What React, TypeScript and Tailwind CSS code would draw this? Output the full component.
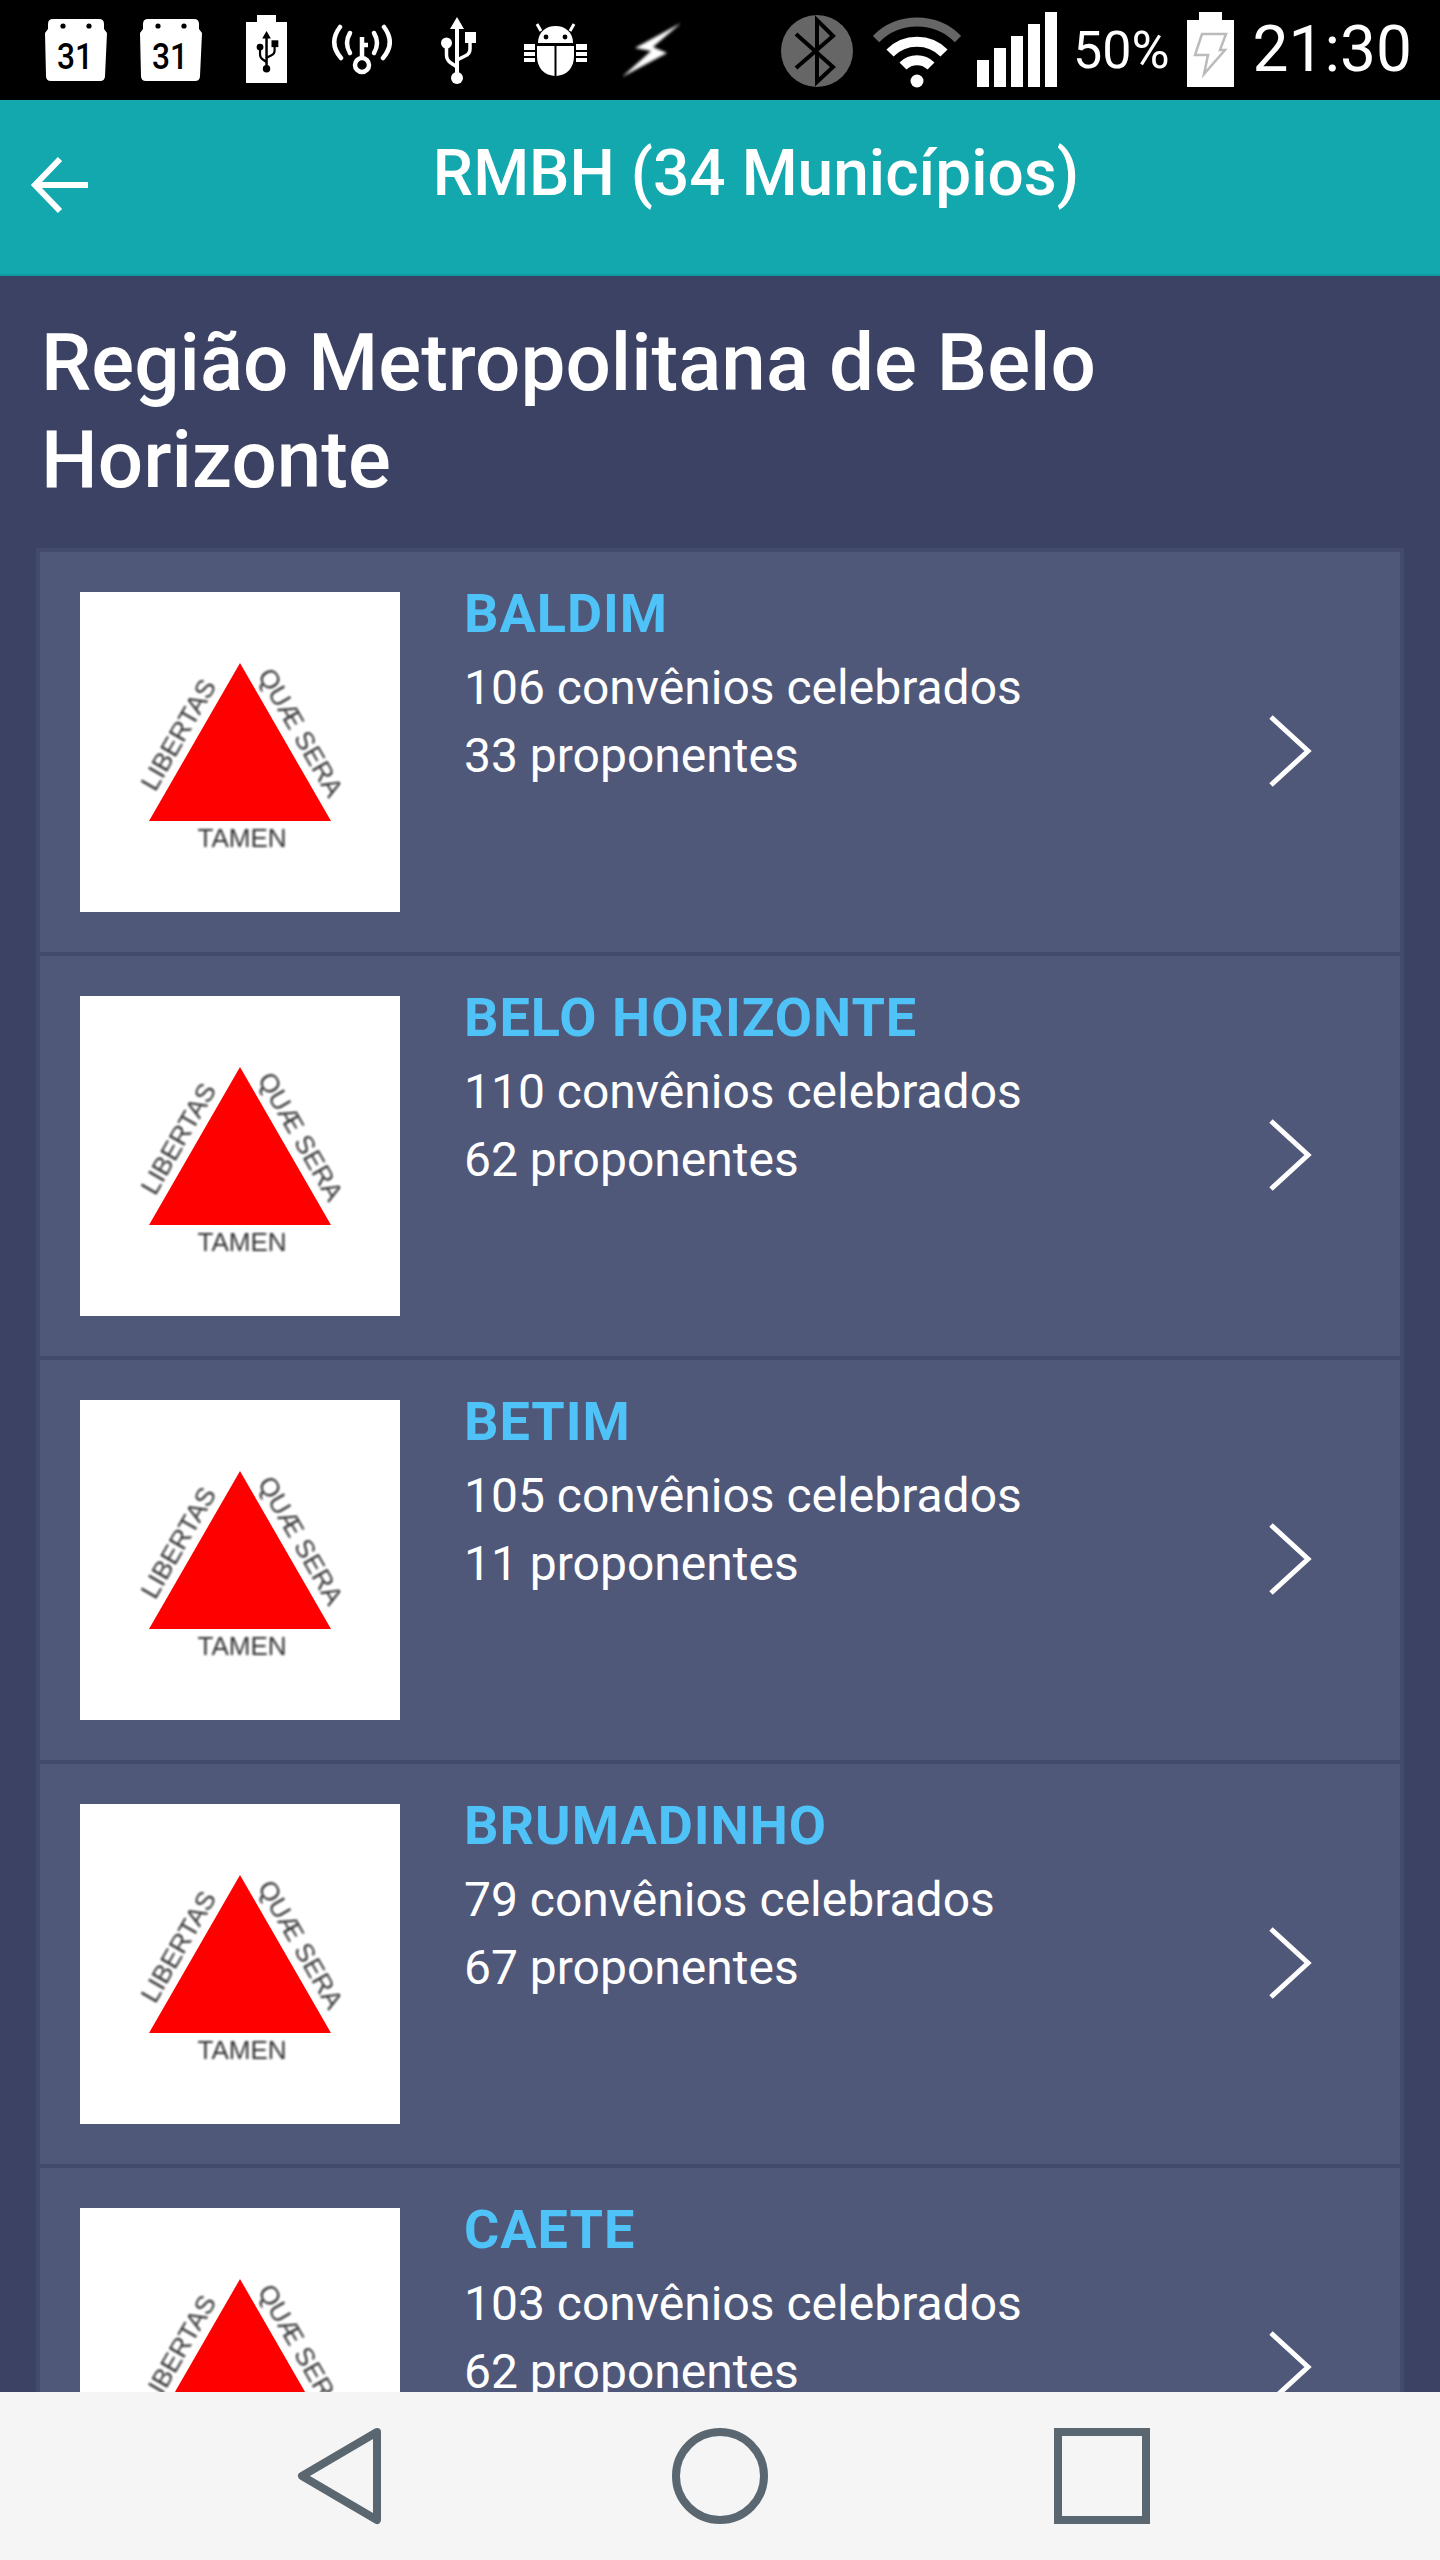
const municipios = [
  { nome: "BALDIM", convenios: 106, proponentes: 33 },
  { nome: "BELO HORIZONTE", convenios: 110, proponentes: 62 },
  { nome: "BETIM", convenios: 105, proponentes: 11 },
  { nome: "BRUMADINHO", convenios: 79, proponentes: 67 },
  { nome: "CAETE", convenios: 103, proponentes: 62 },
];

function UsbGlyph({ x, y, scale, color }: { x: number; y: number; scale: number; color: string }) {
  return (
    <g transform={`translate(${x} ${y}) scale(${scale})`} fill={color} stroke="none">
      <path d="M17 0 L24 12 H19 V58 H15 V12 H10 Z" />
      <circle cx="17" cy="61" r="6" />
      <circle cx="6.5" cy="26" r="5.5" />
      <rect x="25" y="15" width="11" height="11" />
      <path d="M6.5 30 V38 Q6.5 43 11 46 L17 50" fill="none" stroke={color} strokeWidth="3.5" />
      <path d="M30 26 V32 Q30 37 25 39 L17 43" fill="none" stroke={color} strokeWidth="3.5" />
    </g>
  );
}

function Calendario({ className }: { className: string }) {
  return (
    <svg width="62" height="100" viewBox="0 0 62 100" className={className}>
      <path
        d="M8 19 H54 Q59 19 59 24 V29 L62 33 L60 76 Q60 81 55 81 H6 Q1 81 1 76 L0 33 L3 29 V24 Q3 19 8 19 Z"
        fill="#fff"
      />
      <circle cx="18" cy="26" r="2.6" fill="#000" />
      <circle cx="44" cy="26" r="2.6" fill="#000" />
      <text
        x="12"
        y="69"
        fontFamily="Roboto, sans-serif"
        fontWeight="500"
        fontSize="37"
        textLength="36"
        lengthAdjust="spacingAndGlyphs"
        fill="#000"
      >
        31
      </text>
    </svg>
  );
}

function BarraStatus() {
  return (
    <div className="flex h-[100px] shrink-0 items-start bg-black">
      <Calendario className="ml-[45px]" />
      <Calendario className="ml-[33px]" />
      <svg width="41" height="100" viewBox="0 0 41 100" className="ml-[44px]">
        <rect x="11" y="15" width="19" height="8" fill="#fff" />
        <rect x="0" y="22" width="41" height="61" fill="#fff" />
        <UsbGlyph x={10} y={31} scale={0.62} color="#000" />
      </svg>
      <svg width="61" height="100" viewBox="0 0 61 100" className="ml-[44px]" fill="none" stroke="#fff" strokeLinecap="round">
        <circle cx="31" cy="65" r="7" strokeWidth="4.5" />
        <path d="M31 58 V37 M31 45 H37" strokeWidth="4.5" strokeLinecap="butt" />
        <path d="M19 33 Q13 43 19 53" strokeWidth="4.5" />
        <path d="M43 33 Q49 43 43 53" strokeWidth="4.5" />
        <path d="M9 27 Q-3 43 10 58" strokeWidth="4.5" />
        <path d="M53 27 Q65 43 52 58" strokeWidth="4.5" />
      </svg>
      <svg width="36" height="100" viewBox="0 0 36 100" className="ml-[48px]">
        <UsbGlyph x={0} y={17} scale={1} color="#fff" />
      </svg>
      <svg width="63" height="100" viewBox="0 0 63 100" className="ml-[48px]">
        <path d="M17 31 L13 24 M46 31 L50 24" stroke="#fff" strokeWidth="3" />
        <path d="M14 43 C14 32 22 26 31.5 26 C41 26 49 32 49 43 Z" fill="#fff" />
        <circle cx="22" cy="37" r="2.4" fill="#000" />
        <circle cx="41" cy="37" r="2.4" fill="#000" />
        <path d="M13 46 H30.5 V76 C20 75 13 68 13 56 Z" fill="#fff" />
        <path d="M50 46 H32.5 V76 C43 75 50 68 50 56 Z" fill="#fff" />
        <path d="M0 44 H11 V50 H0 Z M0 52 H11 V56 H0 Z M0 58 H11 V62 H0 Z" fill="#fff" />
        <path d="M52 44 H63 V50 H52 Z M52 52 H63 V56 H52 Z M52 58 H63 V62 H52 Z" fill="#fff" />
      </svg>
      <svg width="59" height="100" viewBox="0 0 59 100" className="ml-[35px]">
        <defs>
          <filter id="desfoque">
            <feGaussianBlur stdDeviation="1.6" />
          </filter>
        </defs>
        <path d="M59 23 L13 48 L29 51 L0 77 L45 53 L31 47 Z" fill="#fff" filter="url(#desfoque)" />
      </svg>
      <svg width="72" height="100" viewBox="0 0 72 100" className="ml-[100px]">
        <circle cx="36" cy="51" r="36" fill="#666" />
        <path d="M15 34 L52 67 L36 82 V20 L52 36 L15 68" fill="none" stroke="#000" strokeWidth="4" />
      </svg>
      <svg width="88" height="100" viewBox="0 0 88 100" className="ml-[20px]" fill="none">
        <path d="M3 39 A58 58 0 0 1 85 39" stroke="#666" strokeWidth="9" />
        <path d="M17 53 A38 38 0 0 1 71 53" stroke="#fff" strokeWidth="10" />
        <path d="M30 66 A20 20 0 0 1 58 66" stroke="#fff" strokeWidth="10" />
        <circle cx="44" cy="81" r="6.5" fill="#fff" />
      </svg>
      <svg width="80" height="100" viewBox="0 0 80 100" className="ml-[16px]" fill="#fff">
        <rect x="0" y="60" width="12" height="27" />
        <rect x="17" y="48" width="12" height="39" />
        <rect x="34" y="36" width="12" height="51" />
        <rect x="51" y="24" width="12" height="63" />
        <rect x="68" y="12" width="12" height="75" />
      </svg>
      <span className="ml-[16px] mt-[21px] font-['Roboto',sans-serif] text-[52px] font-normal leading-[60px] text-white">
        50%
      </span>
      <svg width="47" height="100" viewBox="0 0 47 100" className="ml-[17px]">
        <rect x="12" y="12" width="23" height="9" fill="#fff" />
        <rect x="0" y="20" width="47" height="67" fill="#fff" />
        <path d="M15 34 H39 L33 50 H38 L17 74 L21 55 H8 Z" fill="none" stroke="#bbb" strokeWidth="2.5" />
      </svg>
      <span className="ml-[19px] mt-[12px] font-['Roboto',sans-serif] text-[64px] font-normal leading-[76px] text-white">
        21:30
      </span>
    </div>
  );
}

function Brasao() {
  return (
    <svg width="320" height="320" viewBox="0 0 320 320" className="shrink-0 bg-white">
      <defs>
        <filter id="borrao">
          <feGaussianBlur stdDeviation="1" />
        </filter>
      </defs>
      <polygon points="160,71 251,229 69,229" fill="#ff0000" />
      <g
        fontFamily="'Liberation Sans', Arial, sans-serif"
        fill="#111"
        fontSize="26"
        textAnchor="middle"
        opacity="0.85"
        filter="url(#borrao)"
      >
        <text transform="translate(106 147) rotate(-60)">LIBERTAS</text>
        <text transform="translate(213 145) rotate(60)">QUÆ SERA</text>
        <text x="162" y="255">TAMEN</text>
      </g>
    </svg>
  );
}

function CartaoMunicipio({ nome, convenios, proponentes }: (typeof municipios)[number]) {
  return (
    <li className="flex h-[404px] shrink-0 items-start border-x-4 border-t-4 border-[#434b6b] bg-[#50587a] p-10">
      <Brasao />
      <div className="ml-[64px] flex-1 font-['Roboto',sans-serif]">
        <div className="mt-[-8px] text-[54px] font-bold leading-[60px] tracking-[1px] text-[#4fc3f7]">{nome}</div>
        <div className="mt-[10px] text-[48px] leading-[68px] text-white">{convenios} convênios celebrados</div>
        <div className="text-[48px] leading-[68px] text-white">{proponentes} proponentes</div>
      </div>
      <svg width="44" height="72" viewBox="0 0 44 72" className="mr-[48px] mt-[123px] shrink-0" fill="none">
        <path d="M3 2 L40 36 L3 70" stroke="#fff" strokeWidth="5" />
      </svg>
    </li>
  );
}

function BarraNavegacao() {
  return (
    <div className="flex h-[168px] shrink-0 items-start bg-[#f5f5f5]">
      <svg width="88" height="100" viewBox="0 0 88 100" className="ml-[296px] mt-[34px]" fill="none">
        <path d="M81 6 L6 50 L81 94 Z" stroke="#5b6770" strokeWidth="8" strokeLinejoin="round" />
      </svg>
      <svg width="96" height="96" viewBox="0 0 96 96" className="ml-[288px] mt-[36px]" fill="none">
        <circle cx="48" cy="48" r="44" stroke="#5b6770" strokeWidth="8" />
      </svg>
      <svg width="96" height="96" viewBox="0 0 96 96" className="ml-[286px] mt-[36px]" fill="none">
        <rect x="4" y="4" width="88" height="88" stroke="#5b6770" strokeWidth="8" />
      </svg>
    </div>
  );
}

export default function App() {
  return (
    <div className="flex h-[2560px] w-[1440px] flex-col overflow-hidden bg-[#3b4263]">
      <BarraStatus />
      <header className="relative flex h-[176px] shrink-0 items-start justify-center border-b-2 border-[#0f9ca1] bg-[#12a8ad] font-['Roboto',sans-serif]">
        <svg width="60" height="60" viewBox="0 0 60 60" className="absolute left-[30px] top-[55px]" fill="none">
          <path d="M58 30 H6 M30 4 L5 30 L30 56" stroke="#fff" strokeWidth="6" />
        </svg>
        <h1 className="ml-[72px] mt-[34px] text-[64px] font-medium leading-[80px] text-white">RMBH (34 Municípios)</h1>
      </header>
      <main className="min-h-0 flex-1 overflow-hidden">
        <h2 className="mx-[41px] mt-[39px] font-['Roboto',sans-serif] text-[80px] font-medium leading-[97px] text-white">
          Região Metropolitana de Belo Horizonte
        </h2>
        <ul className="mx-[36px] mt-[39px] flex flex-col">
          {municipios.map((m) => (
            <CartaoMunicipio key={m.nome} {...m} />
          ))}
        </ul>
      </main>
      <BarraNavegacao />
    </div>
  );
}
